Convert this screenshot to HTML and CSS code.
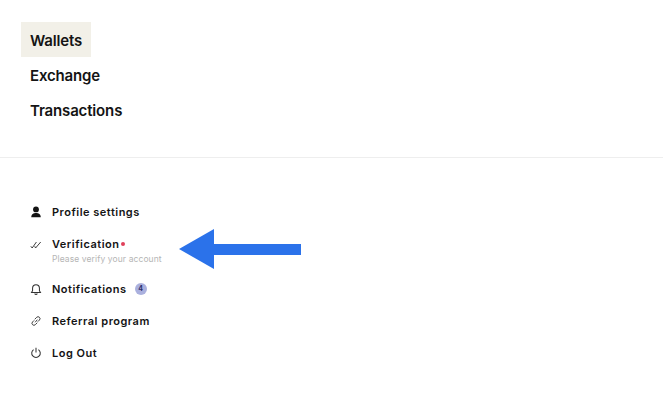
FILE: index.html
```html
<!DOCTYPE html>
<html lang="en">
<head>
  <meta charset="UTF-8" />
  <title>Account menu</title>
  <link rel="stylesheet" href="styles.css">
</head>
<body>
  <nav class="main-nav">
    <a class="main-link active">Wallets</a>
    <a class="main-link">Exchange</a>
    <a class="main-link">Transactions</a>
  </nav>

  <div class="account">
    <div class="account-row">
      <svg class="icon" viewBox="0 0 14 14"><circle cx="7" cy="4" r="3.4" fill="#141414"/><path d="M1.500 13c0-3.500 2.500-4.800 5.500-4.800s5.500 1.300 5.500 4.800z" fill="#141414"/></svg>
      <span class="account-label">Profile settings</span>
    </div>
    <div class="account-row verify">
      <svg class="icon icon-check" viewBox="0 0 14 14"><path d="M1 8.500l1.500 2L7.500 3.500M5.500 8.500l1 2L12.500 3.500" fill="none" stroke="#333" stroke-width="1.100"/></svg>
      <div>
        <div class="verify-title"><span class="account-label">Verification</span><span class="dot"></span></div>
        <div class="hint">Please verify your account</div>
      </div>
    </div>
    <div class="account-row">
      <svg class="icon" viewBox="0 0 14 14"><path d="M1.800 11h10.400L11 9V6a4 4 0 0 0-8 0v3zM5.500 12.300a1.600 1.600 0 0 0 3 0" fill="none" stroke="#333" stroke-width="1.200"/></svg>
      <span class="account-label">Notifications</span>
      <span class="badge">4</span>
    </div>
    <div class="account-row">
      <svg class="icon" viewBox="0 0 14 14"><path d="M6 8.500l2.500-3M5.500 5L7.800 2.700a2.200 2.200 0 0 1 3.200 3.200L9.200 7.700M8.500 9L6.200 11.300a2.200 2.200 0 0 1-3.200-3.200L4.800 6.300" fill="none" stroke="#333" stroke-width="1.100"/></svg>
      <span class="account-label">Referral program</span>
    </div>
    <div class="account-row">
      <svg class="icon" viewBox="0 0 14 14"><path d="M7 1v5.500M4.200 3a5 5 0 1 0 5.600 0" fill="none" stroke="#333" stroke-width="1.200"/></svg>
      <span class="account-label">Log Out</span>
    </div>
  </div>

  <svg class="arrow" width="122" height="40" viewBox="0 0 122 40"><path d="M0 20L35 0V15H122V26H35V40z" fill="#2b72ea"/></svg>
</body>
</html>
```
FILE: styles.css
```css
* {
  margin: 0;
  padding: 0;
  box-sizing: border-box;
}

body {
  background: #fff;
  color: #141414;
  font-family: Inter, "Liberation Sans", sans-serif;
  height: 420px;
  overflow: hidden;
  position: relative;
}

.main-nav {
  display: flex;
  flex-direction: column;
  align-items: flex-start;
  padding: 22px 0 30px 21px;
  border-bottom: 1px solid #eee;
}

.main-link {
  height: 35px;
  line-height: 35px;
  padding: 1px 9px 0;
  font-size: 15px;
  font-weight: 600;
  letter-spacing: -0.150px;
}

.main-link.active {
  background: #f2f0e8;
}

.account {
  padding-top: 38px;
  padding-left: 30px;
}

.account-row {
  display: flex;
  align-items: center;
  height: 32.400px;
}

.account-row.verify {
  height: 44px;
}

.icon {
  width: 12px;
  height: 12px;
  margin-right: 10px;
  flex-shrink: 0;
}

.icon-check {
  margin-bottom: 10px;
}

.account-label {
  font-size: 11px;
  font-weight: 600;
  letter-spacing: 0.500px;
}

.verify-title {
  display: flex;
  align-items: center;
}

.dot {
  width: 4px;
  height: 4px;
  border-radius: 50%;
  background: #e0405a;
  margin-left: 2px;
}

.hint {
  font-size: 8.500px;
  letter-spacing: 0.100px;
  color: #b5b5b5;
  margin-top: 3px;
}

.badge {
  width: 12px;
  height: 12px;
  border-radius: 50%;
  background: #aab0de;
  color: #2c2f6b;
  font-size: 7px;
  font-weight: 700;
  text-align: center;
  line-height: 12px;
  margin-left: 8px;
}

/* pointer drawn over the menu */
.arrow {
  position: absolute;
  left: 179px;
  top: 229px;
}
```
